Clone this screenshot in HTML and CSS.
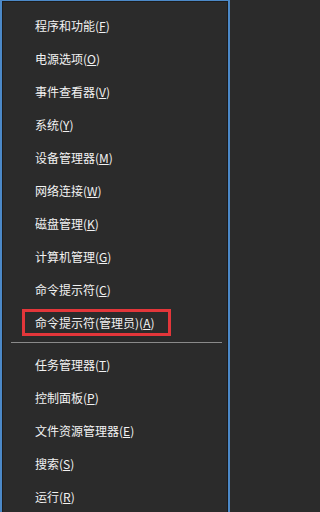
FILE: index.html
```html
<!DOCTYPE html>
<html lang="zh-CN">
<head>
<meta charset="utf-8">
<link rel="stylesheet" href="styles.css">
</head>
<body>
<div class="menu">
  <ul class="group">
    <li class="item">程序和功能(<u>F</u>)</li>
    <li class="item">电源选项(<u>O</u>)</li>
    <li class="item">事件查看器(<u>V</u>)</li>
    <li class="item">系统(<u>Y</u>)</li>
    <li class="item">设备管理器(<u>M</u>)</li>
    <li class="item">网络连接(<u>W</u>)</li>
    <li class="item">磁盘管理(<u>K</u>)</li>
    <li class="item">计算机管理(<u>G</u>)</li>
    <li class="item">命令提示符(<u>C</u>)</li>
    <li class="item item-marked">命令提示符(管理员)(<u>A</u>)</li>
  </ul>
  <div class="separator"></div>
  <ul class="group">
    <li class="item">任务管理器(<u>T</u>)</li>
    <li class="item">控制面板(<u>P</u>)</li>
    <li class="item">文件资源管理器(<u>E</u>)</li>
    <li class="item">搜索(<u>S</u>)</li>
    <li class="item">运行(<u>R</u>)</li>
  </ul>
</div>
</body>
</html>
```
FILE: styles.css
```css
html, body {
  margin: 0;
  padding: 0;
  background: #2b2b2b;
  overflow: hidden;
}

.menu {
  box-sizing: border-box;
  width: 230px;
  height: 512px;
  background: #2b2b2b;
  border-style: solid;
  border-color: #4c89c8;
  border-width: 1px 2px 0 2px;
  box-shadow: inset 1px 1px 0 #1d1d1d, inset -1px 0 0 #1d1d1d;
  padding-top: 8px;
  font-family: "Noto Sans CJK SC", "Microsoft YaHei", sans-serif;
  font-size: 12px;
  color: #f2f2f2;
  overflow: hidden;
}

.group {
  list-style: none;
  margin: 0;
  padding: 0;
}

.item {
  position: relative;
  height: 33px;
  line-height: 33px;
  padding-left: 33px;
  white-space: nowrap;
}

.item u {
  text-decoration: underline;
  text-underline-offset: 1px;
  text-decoration-thickness: 1px;
}

.item-marked::after {
  content: "";
  position: absolute;
  left: 20px;
  top: 3px;
  width: 149px;
  height: 27px;
  box-sizing: border-box;
  border: 3px solid #e3363a;
}

.separator {
  height: 1px;
  margin: 3px 6px 5px 9px;
  background: #8a8a8a;
}
```
